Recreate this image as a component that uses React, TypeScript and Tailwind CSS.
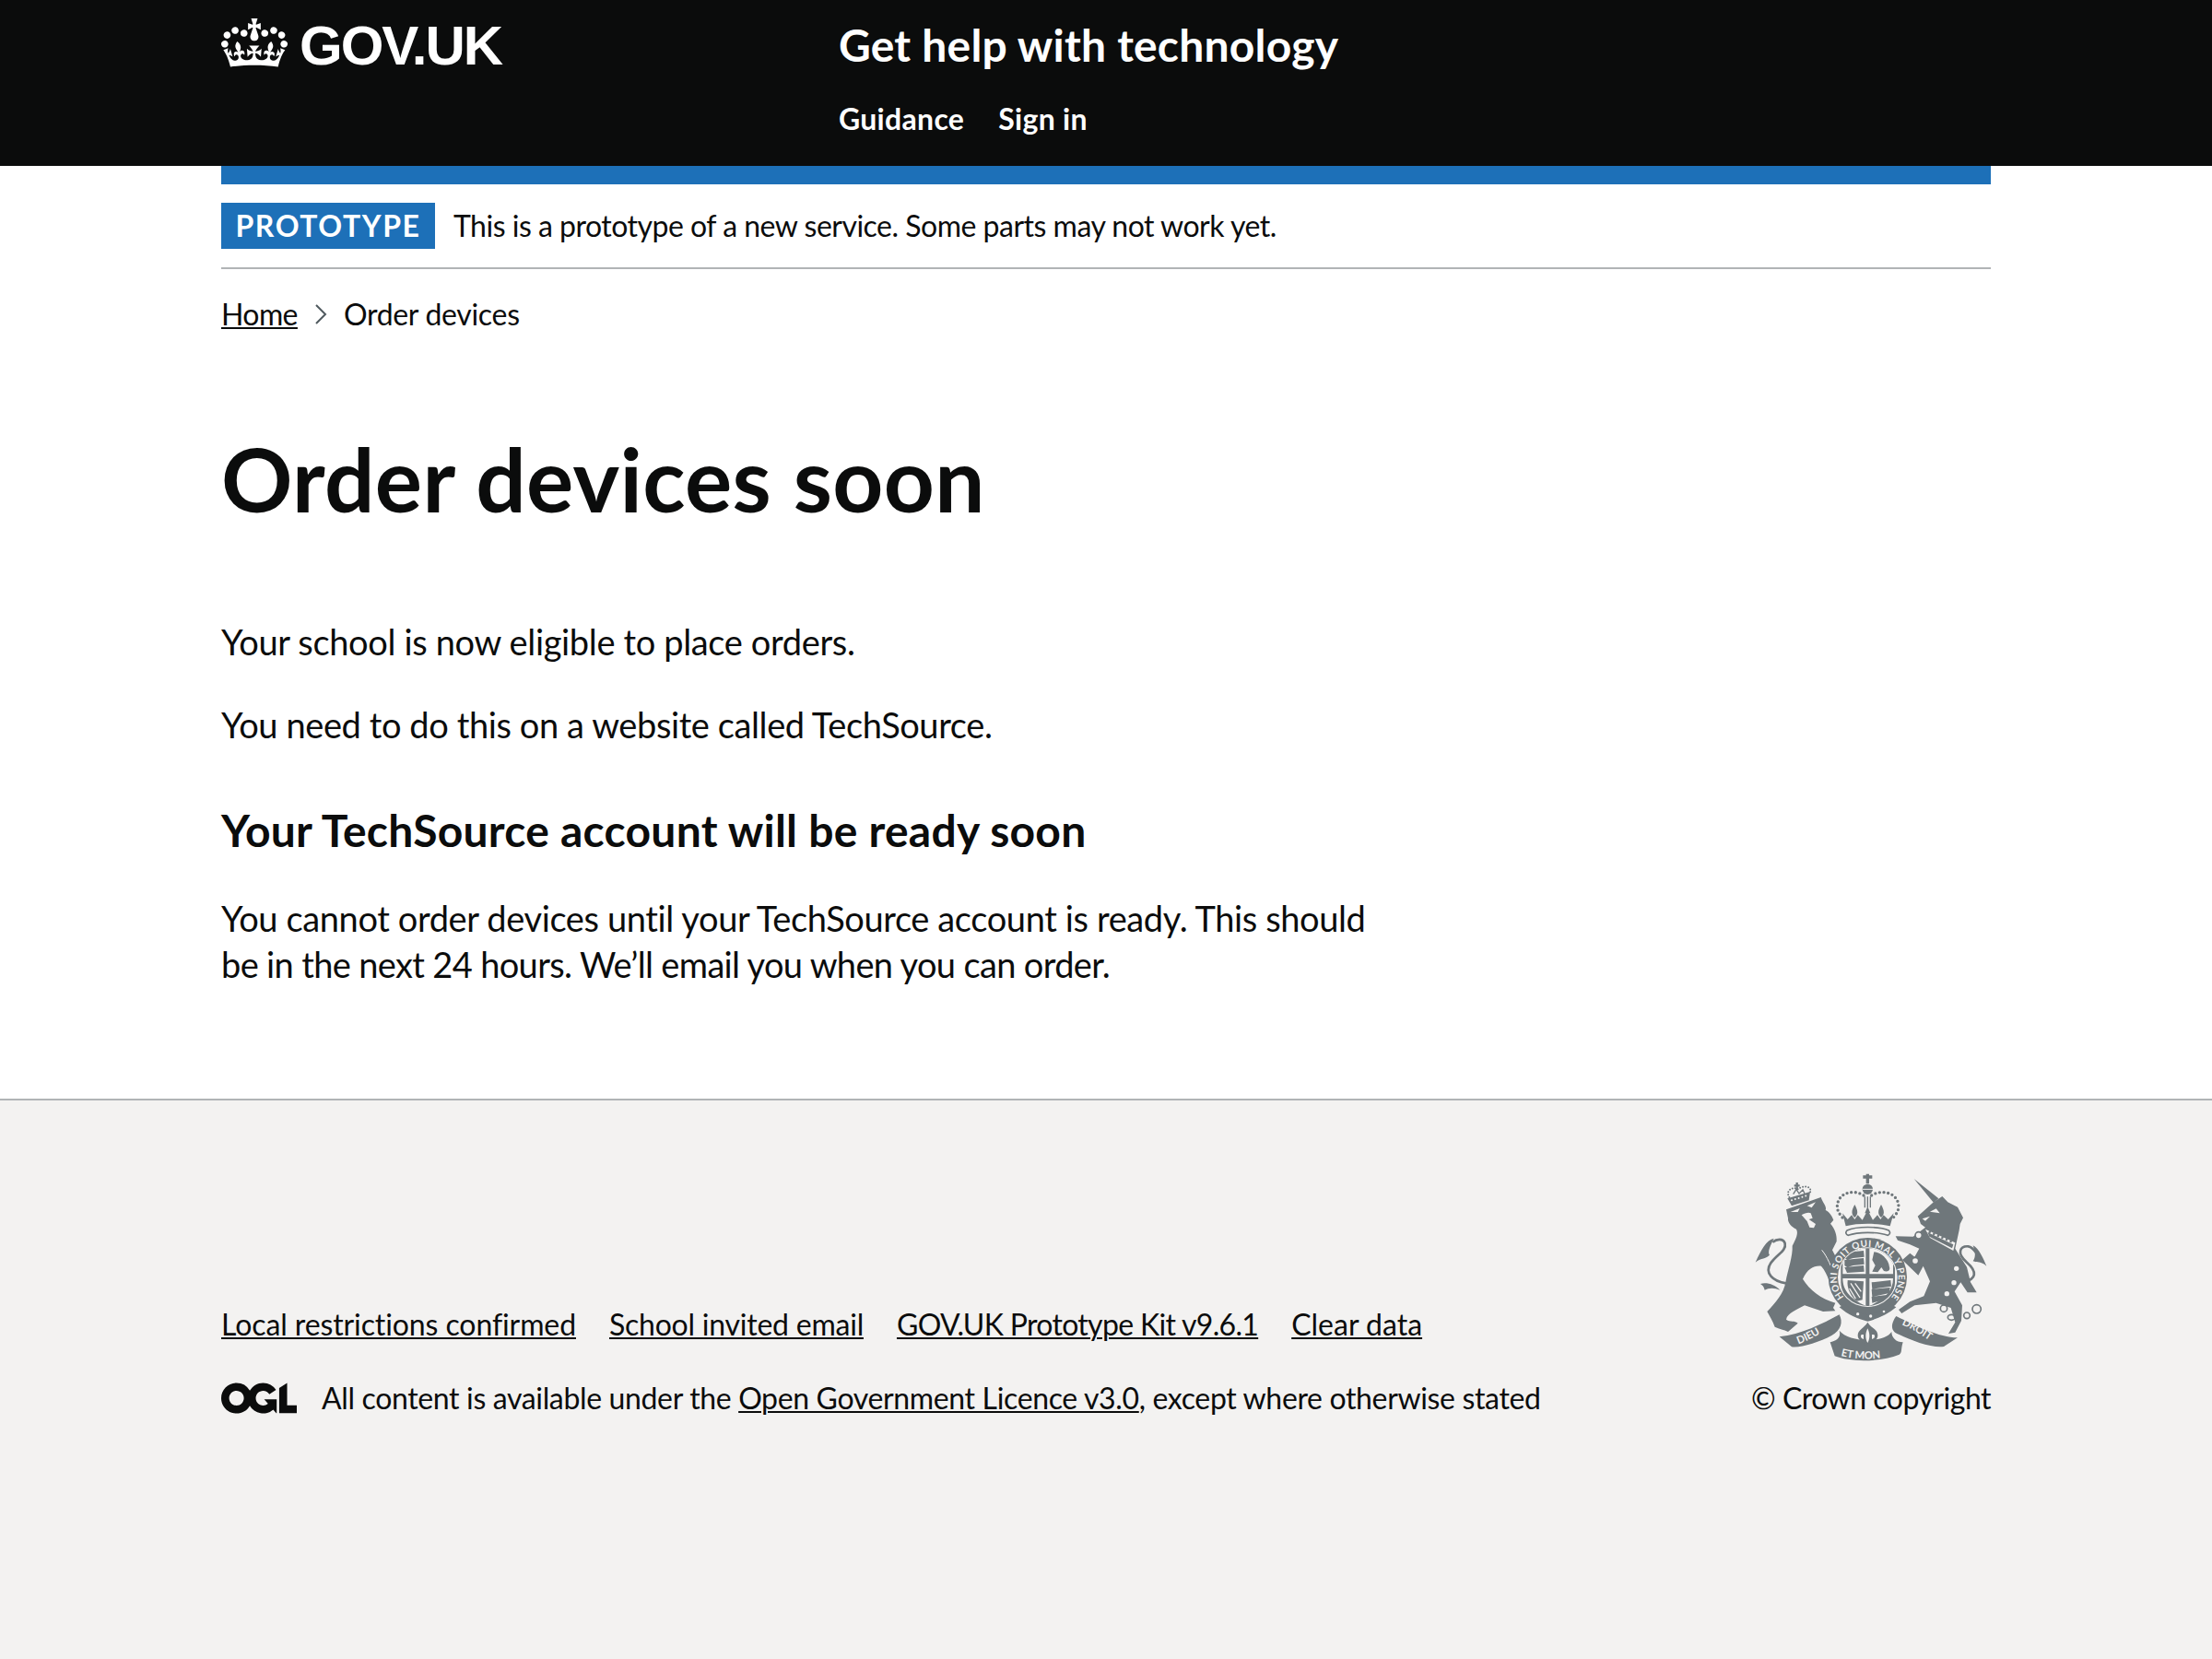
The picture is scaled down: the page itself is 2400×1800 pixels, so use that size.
const font = "font-['Lato',sans-serif]";
const link = "underline underline-offset-[2px] decoration-2";

function Crown({ className }: { className?: string }) {
  return (
    <svg viewBox="0 0 132 97" className={className}>
      <path
        fill="currentColor"
        fillRule="evenodd"
        d="M25 30.2c3.5 1.5 7.7-.2 9.1-3.7 1.5-3.6-.2-7.8-3.9-9.2-3.6-1.4-7.6.3-9.1 3.9-1.4 3.5.3 7.5 3.9 9zM9 39.5c3.6 1.5 7.8-.2 9.2-3.7 1.5-3.6-.2-7.8-3.9-9.1-3.6-1.5-7.6.2-9.1 3.8-1.4 3.5.3 7.5 3.8 9zM4.4 57.2c3.5 1.5 7.7-.2 9.1-3.8 1.5-3.6-.2-7.7-3.9-9.1-3.5-1.5-7.6.3-9.1 3.8-1.4 3.5.3 7.6 3.9 9.1zm38.3-21.4c3.5 1.5 7.7-.2 9.1-3.8 1.5-3.6-.2-7.7-3.9-9.1-3.6-1.5-7.6.3-9.1 3.8-1.3 3.6.4 7.7 3.9 9.1zm64.4-5.6c-3.6 1.5-7.8-.2-9.1-3.7-1.5-3.6.2-7.8 3.8-9.2 3.6-1.4 7.7.3 9.2 3.9 1.3 3.5-.4 7.5-3.9 9zm15.9 9.3c-3.6 1.5-7.7-.2-9.1-3.7-1.5-3.6.2-7.8 3.7-9.1 3.6-1.5 7.7.2 9.2 3.8 1.5 3.5-.3 7.5-3.8 9zm4.7 17.7c-3.6 1.5-7.8-.2-9.2-3.8-1.5-3.6.2-7.7 3.9-9.1 3.6-1.5 7.7.3 9.2 3.8 1.3 3.5-.4 7.6-3.9 9.1zM89.3 35.8c-3.6 1.5-7.8-.2-9.2-3.8-1.4-3.6.2-7.7 3.9-9.1 3.6-1.5 7.7.3 9.2 3.8 1.4 3.6-.3 7.7-3.9 9.1zM69.7 17.7l8.9 4.7V9.3l-8.9 2.8c-.2-.3-.5-.6-.9-.9L72.4 0H59.6l3.5 11.2c-.3.3-.6.5-.9.9l-8.8-2.8v13.1l8.8-4.7c.3.3.6.7.9.9l-5 15.4v.1c-.2.8-.4 1.6-.4 2.4 0 4.1 3.1 7.5 7 8.1h.2c.3 0 .7.1 1 .1.4 0 .7 0 1-.1h.2c4-.6 7.1-4.1 7.1-8.1 0-.8-.1-1.7-.4-2.4V34l-5.1-15.4c.4-.2.7-.6 1-.9zM66 92.8c16.9 0 32.8 1.1 47.1 3.2 4-16.9 8.9-26.7 14-33.5l-9.6-3.4c1 4.9 1.1 7.2 0 10.2-1.5-1.4-3-4.3-4.2-8.7L108.6 76c2.8-2 5-3.2 7.5-3.3-4.4 9.4-10 11.9-13.6 11.2-4.3-.8-6.3-4.6-5.6-7.9 1-4.7 5.7-5.9 8-.5 4.3-8.7-3-11.4-7.6-8.8 7.1-7.2 7.9-13.5 2.1-21.1-8 6.1-8.1 12.3-4.5 20.8-4.7-5.4-12.1-2.5-9.5 6.2 3.4-5.2 7.9-2 7.2 3.1-.6 4.3-6.4 7.8-13.5 7.2-10.3-.9-10.9-8-11.2-13.8 2.5-.5 7.1 1.8 11 7.3L80.2 60c-4.1 4.4-8 5.3-12.3 5.4 1.4-4.4 8-11.6 8-11.6H55.5s6.4 7.2 7.9 11.6c-4.2-.1-8-1-12.3-5.4l1.4 16.4c3.9-5.5 8.5-7.7 10.9-7.3-.3 5.8-.9 12.8-11.1 13.8-7.2.6-12.9-2.9-13.5-7.2-.7-5 3.8-8.3 7.1-3.1 2.7-8.7-4.6-11.6-9.4-6.2 3.7-8.5 3.6-14.7-4.6-20.8-5.8 7.6-5 13.9 2.2 21.1-4.7-2.6-11.9.1-7.7 8.8 2.3-5.5 7.1-4.2 8.1.5.7 3.3-1.3 7.1-5.7 7.9-3.5.7-9-1.8-13.5-11.2 2.5.1 4.7 1.3 7.5 3.3l-4.7-15.4c-1.2 4.4-2.7 7.2-4.3 8.7-1.1-3-.9-5.3 0-10.2l-9.5 3.4c5 6.9 9.9 16.7 14 33.5 14.8-2.1 30.8-3.2 47.7-3.2z"
      />
    </svg>
  );
}

function Ogl({ className }: { className?: string }) {
  return (
    <svg viewBox="0 0 483.2 195.7" className={className}>
      <path
        fill="currentColor"
        d="M421.5 142.8V.1l-50.7 32.3v161.1h112.4v-50.7zm-122.3-9.6A47.12 47.12 0 0 1 221 97.8c0-26 21.1-47.1 47.1-47.1 16.7 0 31.4 8.7 39.7 21.8l42.7-27.2A97.63 97.63 0 0 0 268.1 0c-36.5 0-68.3 20.1-85.1 49.7A98 98 0 0 0 97.8 0C43.9 0 0 43.9 0 97.8s43.9 97.8 97.8 97.8c36.5 0 68.3-20.1 85.1-49.7a97.76 97.76 0 0 0 149.6 25.4l19.4 22.2h3v-87.8h-80l24.3 27.5zM97.8 145c-26 0-47.1-21.1-47.1-47.1s21.1-47.1 47.1-47.1 47.2 21 47.2 47S123.8 145 97.8 145"
      />
    </svg>
  );
}

// Royal arms, traced by hand in the coordinates of the zoomed crop
function Arms({ className }: { className?: string }) {
  const ink = "#6f777b";
  const bg = "#f3f2f1";
  return (
    <svg viewBox="70 40 756 612" className={className}>
      <defs>
        <path id="garter" d="M360 443A100 100 0 1 1 514 443" />
        <path id="ribbonL" d="M212 596C250 582 290 560 330 528" />
        <path id="ribbonM" d="M350 634C400 648 480 648 525 630" />
        <path id="ribbonR" d="M548 532C585 548 625 575 658 598" />
        <clipPath id="shieldClip">
          <circle cx="437" cy="378" r="94" />
        </clipPath>
      </defs>
      {/* lion tail */}
      <path d="M172 398C128 392 100 365 122 332C140 305 174 292 168 268C162 250 140 254 128 264" fill="none" stroke={ink} strokeWidth="8" />
      <path d="M132 252C108 256 90 290 72 330C90 314 100 322 118 306C110 296 122 272 132 252Z" fill={ink} />
      <path d="M88 400C108 394 135 402 152 420C135 412 115 412 102 420C100 410 95 404 88 400Z" fill={ink} />
      {/* lion */}
      <path
        d="M172 158L285 118C290 135 306 150 300 160C312 165 322 180 326 192L316 204C330 220 338 240 336 262L322 290C335 315 352 345 345 372C342 390 325 395 312 390C305 372 298 355 286 342C262 340 242 350 226 384C248 420 285 448 332 462L325 478L332 488L292 490L232 470C205 485 176 495 172 516C185 525 200 518 210 528L178 556C165 548 150 548 135 540C128 520 118 505 110 490C135 465 165 430 170 395C178 350 194 310 192 276C205 250 212 235 205 222C190 215 176 200 178 186Z"
        fill={ink}
      />
      <path d="M222 176C232 170 245 166 252 170L258 186L246 190L268 205L262 218L248 216L240 196Z" fill={bg} />
      <path d="M186 166L216 154L210 166ZM240 146L268 134L255 152Z" fill={bg} />
      <path d="M288 290C305 310 320 345 330 378" fill="none" stroke={bg} strokeWidth="3" />
      {/* lion crown */}
      <path d="M176 122L250 100L246 128L190 146Z" fill={ink} />
      <path d="M190 128L240 112" stroke={bg} strokeWidth="6" strokeDasharray="0 12" strokeLinecap="round" />
      <path d="M182 118C168 95 195 82 210 92C225 78 258 82 250 102" fill="none" stroke={ink} strokeWidth="6" strokeDasharray="0 9" strokeLinecap="round" />
      <path d="M207 70V94M198 80H216" stroke={ink} strokeWidth="7" />
      <path d="M195 108L205 92L214 106L226 94L232 106" fill="none" stroke={ink} strokeWidth="4" />
      {/* royal crown */}
      <path d="M437 42V74M422 52H452" stroke={ink} strokeWidth="10" />
      <circle cx="437" cy="92" r="17" fill={ink} />
      <path d="M420 92H454" stroke={bg} strokeWidth="3" />
      <path d="M428 116V152M437 116V152M446 116V152" stroke={ink} strokeWidth="4" />
      <path d="M424 112C395 92 340 100 338 148C338 165 350 178 360 190" fill="none" stroke={ink} strokeWidth="10" strokeDasharray="0 14" strokeLinecap="round" />
      <path d="M450 112C479 92 536 100 538 148C538 165 526 178 516 190" fill="none" stroke={ink} strokeWidth="10" strokeDasharray="0 14" strokeLinecap="round" />
      <path d="M355 170L372 190L385 176L395 190L405 176L420 192L437 160L454 192L469 176L479 190L489 176L504 190L522 170L510 212C470 202 405 202 366 212Z" fill={ink} />
      <path d="M395 142C385 160 382 172 395 184C408 172 405 160 395 142ZM481 142C471 160 468 172 481 184C494 172 491 160 481 142ZM437 148L428 170H446Z" fill={ink} />
      <path d="M370 226C400 212 476 212 506 226C512 232 510 240 502 242C470 230 405 230 374 242C366 240 364 232 370 226Z" fill={bg} stroke={ink} strokeWidth="5" />
      {/* garter and shield */}
      <circle cx="437" cy="378" r="128" fill={ink} />
      <circle cx="437" cy="378" r="97" fill={bg} />
      <g clipPath="url(#shieldClip)">
        <path d="M350 278H526V395C526 440 480 480 437 490C394 480 350 440 350 395Z" fill={ink} />
        <path d="M356 284H431V368H356ZM443 284H520V368H443ZM356 382H431V472C385 450 356 425 356 382ZM443 382H520C520 425 490 450 443 472Z" fill={bg} />
        <g fill={ink}>
          <path d="M362 298L424 292L426 312L390 316L370 322L362 316ZM362 322L424 316L426 336L390 340L370 346L362 340ZM362 346L424 340L426 360L370 364Z" />
          <path d="M450 395L512 388L514 408L470 414L452 418ZM450 418L510 412L508 430L470 438L452 442ZM450 442L500 436L490 452L452 462Z" />
          <path d="M458 296C480 298 505 318 508 345C512 358 500 362 490 358L482 346L470 362L452 360L462 340L452 322Z" />
        </g>
        <path d="M372 388L424 392L420 452L402 456C385 445 368 415 372 388Z" fill={ink} />
        <path d="M382 398L412 445M396 398L416 425M378 415L398 448" stroke={bg} strokeWidth="4" />
      </g>
      <text fontFamily="Lato, sans-serif" fontSize="30" fill={bg} fontWeight="700">
        <textPath href="#garter" textLength="452">HONI SOIT QUI MAL Y PENSE</textPath>
      </text>
      <path d="M345 476C372 500 405 514 437 522C470 514 502 500 530 476L512 466C490 485 460 496 437 500C415 496 385 485 362 466Z" fill={ink} />
      <circle cx="405" cy="498" r="5" fill={bg} />
      <circle cx="447" cy="505" r="5" fill={bg} />
      <circle cx="490" cy="490" r="4" fill={bg} />
      {/* unicorn */}
      <path d="M588 58L668 122L652 136Z" fill={ink} />
      <path
        d="M600 180L650 135L680 115L698 134L730 150L748 185L738 205L735 225L722 285L760 345L772 395L792 428L762 428L740 395L720 425L745 470L742 520L722 558L700 562L722 525L708 478L660 462L590 470L548 496L538 484L575 458L620 440L640 392L618 342L602 372L550 322L575 300L590 312L605 285L575 272L535 258L528 245L585 246L625 216L610 205L605 190Z"
        fill={ink}
      />
      <path d="M625 222L722 266L716 292L640 250Z" fill={bg} />
      <path d="M632 232L716 272L712 284L638 246Z" fill={ink} />
      <path d="M636 230L712 264" stroke={ink} strokeWidth="7" strokeDasharray="7 8" />
      <g fill={bg}>
        <circle cx="726" cy="350" r="8" />
        <circle cx="718" cy="396" r="8" />
        <circle cx="695" cy="432" r="8" />
      </g>
      <g fill={bg} stroke={ink} strokeWidth="5">
        <circle cx="603" cy="242" r="11" />
        <circle cx="592" cy="325" r="11" />
      </g>
      <path d="M640 165L660 155L672 170ZM615 188L640 180L625 195Z" fill={bg} />
      <g fill="none" stroke={ink} strokeWidth="5">
        <circle cx="685" cy="480" r="11" />
        <ellipse cx="710" cy="509" rx="12" ry="9" />
        <circle cx="760" cy="503" r="10" />
        <circle cx="792" cy="482" r="14" />
      </g>
      {/* unicorn tail */}
      <path d="M748 395C792 385 795 360 760 330C725 300 738 276 765 278C780 280 786 294 795 305" fill="none" stroke={ink} strokeWidth="8" />
      <path d="M780 275C800 285 815 320 824 342C805 325 795 332 780 326C792 310 785 290 780 275Z" fill={ink} />
      {/* motto ribbons */}
      <path d="M150 572C220 565 290 530 345 500C358 525 350 552 320 568C280 590 215 610 190 605Z" fill={ink} />
      <path d="M730 575C670 575 590 535 530 505C512 530 510 555 540 565C580 585 650 610 685 604Z" fill={ink} />
      <path d="M315 590C335 585 352 575 345 552C375 590 490 595 515 556C515 575 530 590 552 590C545 610 550 625 540 630C480 655 380 655 330 635Z" fill={ink} />
      <path d="M437 525C425 545 405 548 405 568C405 585 425 590 430 602L445 602C450 590 470 585 470 568C470 548 450 545 437 525Z" fill={ink} />
      <path d="M437 545C430 560 428 575 437 592C446 575 444 560 437 545ZM417 565C412 572 416 578 424 580L424 565ZM458 565C463 572 459 578 451 580L451 565Z" fill={bg} />
      <g fontFamily="Lato, sans-serif" fontSize="34" fontWeight="700" fill={bg}>
        <text><textPath href="#ribbonL">DIEU</textPath></text>
        <text><textPath href="#ribbonM">ET MON</textPath></text>
        <text><textPath href="#ribbonR">DROIT</textPath></text>
      </g>
    </svg>
  );
}

export default function App() {
  return (
    <div className={`${font} min-h-screen flex flex-col bg-white text-[#0b0c0c]`}>
      <header className="bg-[#0b0c0c] h-[180px] shrink-0">
        <div className="w-[1920px] mx-auto flex">
          <div className="w-[670px] flex items-start gap-[13px] pt-[20px]">
            <Crown className="w-[72px] h-[53px] text-white" />
            <span className="text-[60px] leading-[60px] font-bold text-white font-['Liberation_Sans',sans-serif] tracking-[-2px]">
              GOV.UK
            </span>
          </div>
          <div className="pt-[19px] text-white font-bold">
            <div className="text-[48px] leading-[60px] tracking-[0.2px]">Get help with technology</div>
            <nav className="flex gap-[37px] mt-[25px] text-[32px] leading-[50px] tracking-[0.3px]">
              <a>Guidance</a>
              <a>Sign in</a>
            </nav>
          </div>
        </div>
      </header>

      <main className="w-[1920px] mx-auto flex-1">
        <div className="h-[20px] bg-[#1d70b8]" />
        <div className="flex items-center gap-[20px] h-[92px] border-b-2 border-[#b1b4b6] text-[32px]">
          <span className="bg-[#1d70b8] text-white font-bold h-[50px] w-[232px] flex items-center justify-center text-[32px] tracking-[1.6px]">
            PROTOTYPE
          </span>
          <p className="tracking-[-0.5px]">This is a prototype of a new service. Some parts may not work yet.</p>
        </div>
        <div className="flex items-center mt-[24px] h-[50px] text-[32px] tracking-[-0.3px]">
          <a className={`${link} tracking-[-0.6px]`}>Home</a>
          <svg viewBox="0 0 14 24" className="w-[14px] h-[24px] mx-[18px]">
            <path d="M2 2L12 12L2 22" fill="none" stroke="#505a5f" strokeWidth="2" />
          </svg>
          <span>Order devices</span>
        </div>
        <h1 className="text-[96px] leading-[100px] font-bold mt-[103px] tracking-[0.35px]">Order devices soon</h1>
        <p className="text-[38px] leading-[50px] mt-[102px] tracking-[-0.35px]">Your school is now eligible to place orders.</p>
        <p className="text-[38px] leading-[50px] mt-[40px] tracking-[-0.4px]">You need to do this on a website called TechSource.</p>
        <h2 className="text-[48px] leading-[60px] font-bold mt-[60px] tracking-[0.25px]">Your TechSource account will be ready soon</h2>
        <p className="text-[38px] leading-[50px] mt-[40px] w-[1260px] tracking-[-0.38px]">
          You cannot order devices until your TechSource account is ready. This should{" "}
          <span className="tracking-[-0.65px]">be in the next 24 hours. We’ll email you when you can order.</span>
        </p>
      </main>

      <footer className="bg-[#f3f2f1] border-t-2 border-[#b1b4b6] h-[608px] shrink-0">
        <div className="w-[1920px] mx-auto flex justify-between items-end text-[32px] h-[347px]">
          <div>
            <ul className="flex gap-[36px]">
              <li><a className={`${link} tracking-[-0.1px]`}>Local restrictions confirmed</a></li>
              <li><a className={`${link} tracking-[-0.23px]`}>School invited email</a></li>
              <li><a className={`${link} tracking-[-0.68px]`}>GOV.UK Prototype Kit v9.6.1</a></li>
              <li><a className={link}>Clear data</a></li>
            </ul>
            <div className="flex items-center mt-[32px] gap-[27px] tracking-[-0.35px]">
              <Ogl className="w-[82px] h-[34px]" />
              <span>
                All content is available under the <a className={link}>Open Government Licence v3.0</a>, except where otherwise stated
              </span>
            </div>
          </div>
          <div className="flex flex-col items-end tracking-[-0.5px]">
            <Arms className="w-[252px] h-[204px] mr-[4px] mb-[16px]" />
            <span>© Crown copyright</span>
          </div>
        </div>
      </footer>
    </div>
  );
}
